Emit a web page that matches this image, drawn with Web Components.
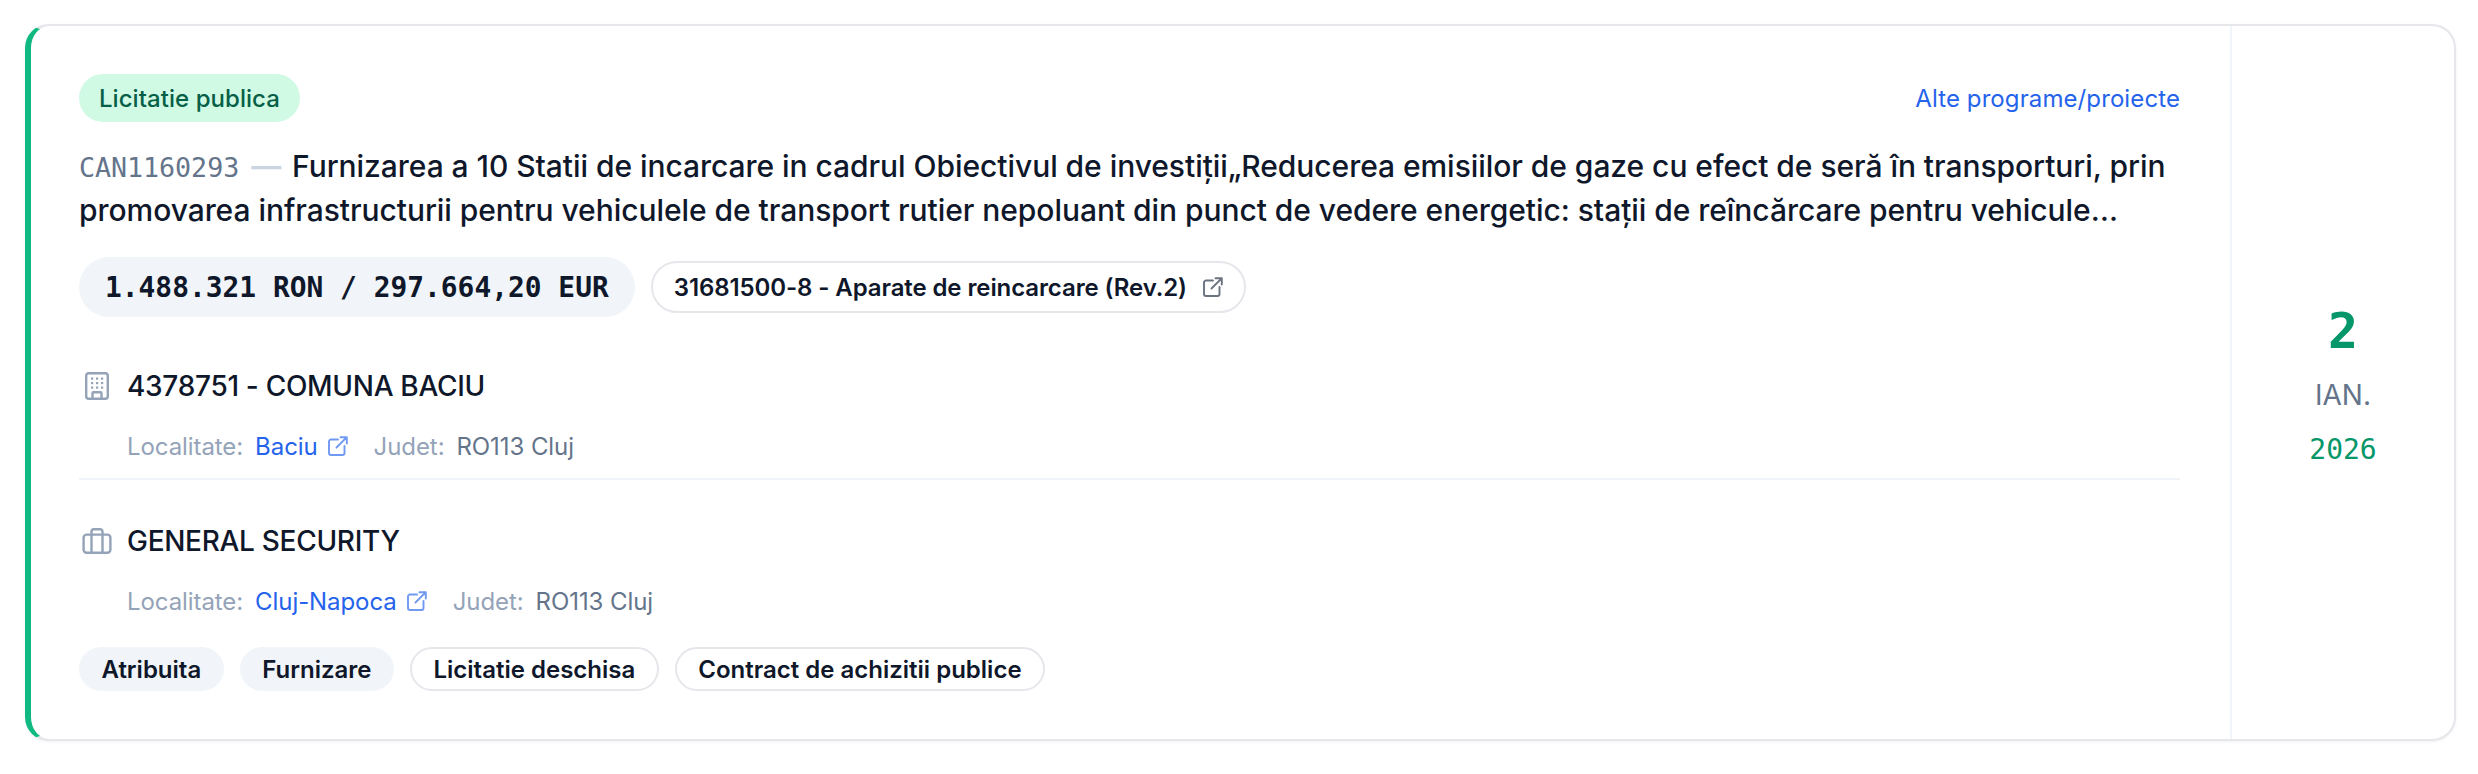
<!DOCTYPE html>
<html lang="ro"><head><meta charset="utf-8"><title>Licitatie</title>
<style>
html,body{margin:0;background:#fff}
body{padding:24px 22px 33px 25px;font-family:Inter,"Liberation Sans",sans-serif;color:#0f172a}
</style></head><body>
<tender-card>
  <status-pill slot="top">Licitatie publica</status-pill>
  <a slot="program">Alte programe/proiecte</a>
  <span slot="code">CAN1160293</span>
  <span slot="title">Furnizarea a 10 Statii de incarcare in cadrul Obiectivul de investiții„Reducerea emisiilor de gaze cu efect de seră în transporturi, prin promovarea infrastructurii pentru vehiculele de transport rutier nepoluant din punct de vedere energetic: staţii de reîncărcare pentru vehicule…</span>
  <money-pill slot="values">1.488.321 RON / 297.664,20 EUR</money-pill>
  <tag-chip slot="values" variant="outline" ext style="--h:52px;--px:21px;--ls:-.1px">31681500-8 - Aparate de reincarcare (Rev.2)</tag-chip>
  <party-block slot="parties" icon="building" name="4378751 - COMUNA BACIU" city="Baciu" county="RO113 Cluj" divider></party-block>
  <party-block slot="parties" icon="briefcase" name="GENERAL SECURITY" city="Cluj-Napoca" county="RO113 Cluj"></party-block>
  <tag-chip slot="tags" style="--px:22.5px">Atribuita</tag-chip>
  <tag-chip slot="tags" style="--px:22.5px">Furnizare</tag-chip>
  <tag-chip slot="tags" variant="outline" style="--px:21.5px">Licitatie deschisa</tag-chip>
  <tag-chip slot="tags" variant="outline" style="--px:21.5px">Contract de achizitii publice</tag-chip>
  <date-col slot="date" day="2" month="IAN." year="2026"></date-col>
</tender-card>
<script>
const MONO='"DejaVu Sans Mono","Liberation Mono",monospace';
const EXT=`<svg viewBox="0 0 20 20" width="20" height="20" fill="none" stroke="currentColor" stroke-width="1.9" stroke-linecap="round" stroke-linejoin="round"><path d="M10 3.5H3a2 2 0 0 0-2 2V17a2 2 0 0 0 2 2h11.5a2 2 0 0 0 2-2v-7"/><path d="M8.5 11.5 18.6 1.4M12.5 1.2h6.3v6.3"/></svg>`;
const ICONS={
 building:`<svg viewBox="0 0 24 28" width="24" height="28" fill="none" stroke="currentColor" stroke-width="2.4" stroke-linejoin="round"><rect x="1.2" y="1.2" width="21.6" height="25.6" rx="2.6"/><path d="M7.5 26.5v-5.2a1 1 0 0 1 1-1h7a1 1 0 0 1 1 1v5.2"/><g fill="currentColor" stroke="none"><rect x="6" y="5.5" width="2.2" height="2.2"/><rect x="11" y="5.5" width="2.2" height="2.2"/><rect x="16" y="5.5" width="2.2" height="2.2"/><rect x="6" y="10" width="2.2" height="2.2"/><rect x="11" y="10" width="2.2" height="2.2"/><rect x="16" y="10" width="2.2" height="2.2"/><rect x="6" y="14.5" width="2.2" height="2.2"/><rect x="11" y="14.5" width="2.2" height="2.2"/><rect x="16" y="14.5" width="2.2" height="2.2"/></g></svg>`,
 briefcase:`<svg viewBox="0 0 30 26" width="30" height="26" fill="none" stroke="currentColor" stroke-width="2.4" stroke-linejoin="round"><rect x="1.6" y="6.6" width="26.8" height="18.2" rx="3"/><path d="M9.5 6.6v17.8M20.5 6.6v17.8M9.5 6.6V3.6a2.4 2.4 0 0 1 2.4-2.4h6.2a2.4 2.4 0 0 1 2.4 2.4v3"/></svg>`
};
function def(name,css,html){
 customElements.define(name,class extends HTMLElement{
  connectedCallback(){
   if(this.shadowRoot)return;
   const r=this.attachShadow({mode:'open'});
   r.innerHTML=`<style>${css}</style>`+(typeof html==='function'?html(this):html);
  }
 });
}
def('status-pill',`:host{display:inline-flex;align-items:center;height:48px;padding:0 20px;border-radius:24px;background:#d1fae5;color:#065f46;font-size:24px;font-weight:500;white-space:nowrap;letter-spacing:.05px}`,`<slot></slot>`);
def('money-pill',`:host{display:inline-flex;align-items:center;height:60px;padding:0 26px;border-radius:30px;background:#f1f5f9;color:#0f172a;font:700 27.9px ${MONO};white-space:nowrap}`,`<slot></slot>`);
def('tag-chip',`:host{display:inline-flex;align-items:center;box-sizing:border-box;height:var(--h,44px);padding:0 var(--px,22px);border-radius:26px;background:#f1f5f9;font-size:24px;font-weight:600;color:#0f172a;white-space:nowrap;gap:16px;letter-spacing:var(--ls,0)}
 :host([variant=outline]){background:#fff;border:2px solid #e5e7eb}
 span{display:flex;color:#6b7280}`,h=>`<slot></slot>`+(h.hasAttribute('ext')?`<span>${EXT}</span>`:''));
def('party-block',`:host{display:block;padding-bottom:17px}
 :host([divider]){border-bottom:2px solid #f1f5f9;margin-bottom:46px}
 .name{display:flex;align-items:center;height:30px;font-size:28px;font-weight:500;color:#0f172a;letter-spacing:-.3px}
 .ic{width:48px;flex:none;display:flex;justify-content:center;color:#94a3b8;box-sizing:border-box;padding-right:12px}
 .meta{display:flex;align-items:center;margin:30px 0 0 48px;height:30px;font-size:24px;color:#94a3b8;white-space:nowrap;letter-spacing:-.08px}
 .city{color:#2563eb;margin-left:12px}
 .ex{display:flex;color:#2563eb;opacity:.65;margin:0 26px 0 10px}
 .val{color:#64748b;margin-left:12px}`,
 h=>`<div class="name"><span class="ic">${ICONS[h.getAttribute('icon')]}</span><span>${h.getAttribute('name')}</span></div>
 <div class="meta"><span>Localitate:</span><span class="city">${h.getAttribute('city')}</span><span class="ex">${EXT}</span><span>Judet:</span><span class="val">${h.getAttribute('county')}</span></div>`);
def('date-col',`:host{display:flex;box-sizing:border-box;padding-top:5px;flex-direction:column;align-items:center;justify-content:center;height:100%}
 .d{font:700 50px/56px ${MONO};color:#059669}
 .m{font-size:28px;line-height:34px;color:#64748b;margin-top:19px}
 .y{font:400 28px/34px ${MONO};color:#059669;margin-top:21px}`,
 h=>`<div class="d">${h.getAttribute('day')}</div><div class="m">${h.getAttribute('month')}</div><div class="y">${h.getAttribute('year')}</div>`);
def('tender-card',`:host{display:flex;box-sizing:border-box;height:717px;background:#fff;border:2px solid #e5e7eb;border-left:6px solid #10b981;border-radius:24px;box-shadow:0 1px 3px rgba(15,23,42,.06)}
 main{flex:1;min-width:0;padding:48px 50px 0 48px}
 aside{width:222px;flex:none;border-left:2px solid #f1f5f9}
 .top{display:flex;justify-content:space-between;align-items:center}
 ::slotted(a){color:#2563eb;font-size:24px;letter-spacing:.1px}
 h2{margin:22px 0 0;font-size:30px;line-height:44px;font-weight:500;color:#0f172a;letter-spacing:-.05px}
 .code{font:400 26.7px ${MONO};color:#64748b}
 .dash{color:#cbd5e1;font-weight:600;margin:0 3px 0 4px}
 .vals{display:flex;align-items:center;gap:16px;margin-top:25px}
 .parties{margin-top:54px}
 .tags{display:flex;gap:16px;margin-top:14px}`,
 `<main><div class="top"><slot name="top"></slot><slot name="program"></slot></div>
 <h2><span class="code"><slot name="code"></slot></span> <span class="dash">—</span> <slot name="title"></slot></h2>
 <div class="vals"><slot name="values"></slot></div>
 <div class="parties"><slot name="parties"></slot></div>
 <div class="tags"><slot name="tags"></slot></div></main>
 <aside><slot name="date"></slot></aside>`);
</script>
</body></html>
